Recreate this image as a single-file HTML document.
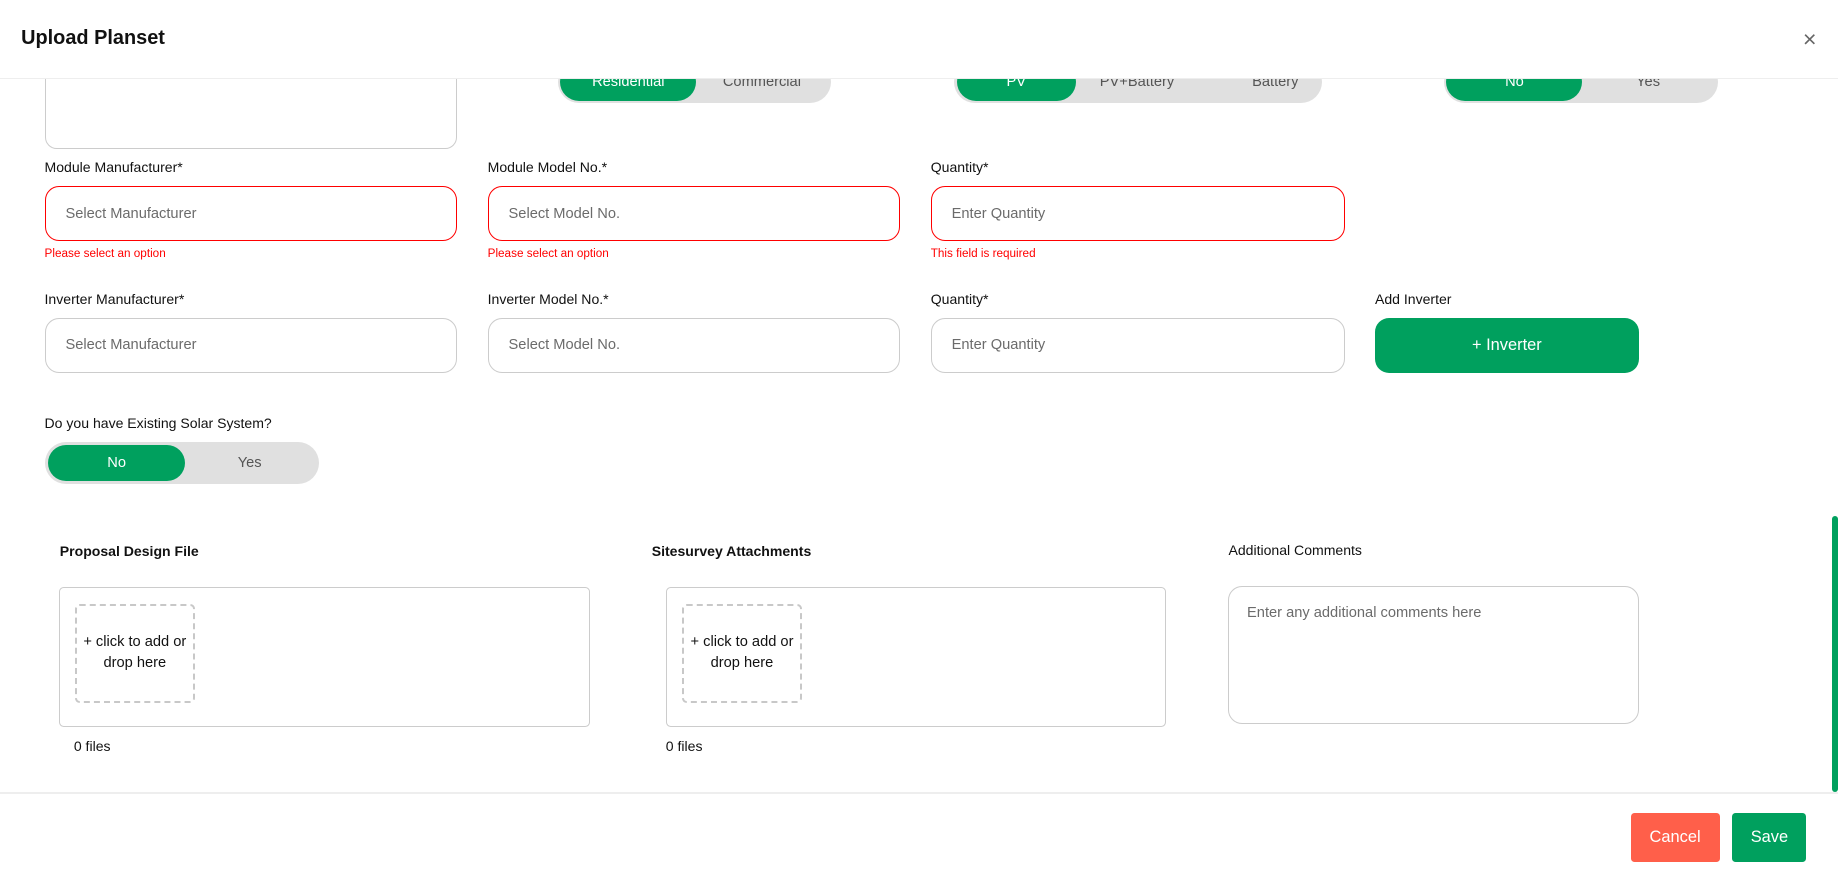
<!DOCTYPE html>
<html><head><meta charset="utf-8"><style>
html{zoom:1.17219}
*{box-sizing:border-box;margin:0;padding:0}
body{width:1568px;height:752px;position:relative;overflow:hidden;background:#fff;font-family:"Liberation Sans",sans-serif;color:#111}
.a{position:absolute}
.hdr{left:0;top:0;width:1568px;height:67px;background:#fff;border-bottom:1px solid #eee;z-index:5}
.lbl{font-size:12px;color:#111;white-space:nowrap}
.inp{border:1px solid #ccc;border-radius:12px;background:#fff;font-size:12.5px;color:#6b6b6b;padding-left:17px;display:flex;align-items:center}
.err{border-color:#f00}
.em{font-size:10px;color:#f00}
.tg{background:#e0e0e0;border-radius:20px}
.on{background:#00a05e;color:#fff;border-radius:18px;display:flex;align-items:center;justify-content:center;font-size:12.5px}
.off{color:#555;font-size:12.5px;display:flex;align-items:center;justify-content:center}
.box{border:1px solid #ccc;border-radius:4px}
.dash{border:2px dashed #c8c8c8;border-radius:4px;font-size:12.5px;text-align:center;display:flex;align-items:center;justify-content:center;line-height:18px;color:#111}
</style></head><body>
<div class="a hdr"><div class="a" style="left:18px;top:23px;font-size:17px;font-weight:bold">Upload Planset</div>
<div class="a" style="left:1538px;top:22px;font-size:20px;color:#666">×</div></div>

<div class="a inp" style="left:38px;top:40px;width:352px;height:87px;border-radius:10px"></div>
<div class="a tg" style="left:476px;top:52px;width:233px;height:36px"></div>
<div class="a on" style="left:478px;top:54px;width:116px;height:32px">Residential</div>
<div class="a off" style="left:594px;top:54px;width:112px;height:32px">Commercial</div>
<div class="a tg" style="left:814px;top:52px;width:314px;height:36px"></div>
<div class="a on" style="left:816px;top:54px;width:102px;height:32px">PV</div>
<div class="a off" style="left:918px;top:54px;width:104px;height:32px">PV+Battery</div>
<div class="a off" style="left:1036px;top:54px;width:104px;height:32px">Battery</div>
<div class="a tg" style="left:1232px;top:52px;width:234px;height:36px"></div>
<div class="a on" style="left:1234px;top:54px;width:116px;height:32px">No</div>
<div class="a off" style="left:1350px;top:54px;width:112px;height:32px">Yes</div>

<div class="a lbl" style="left:38px;top:136px">Module Manufacturer*</div>
<div class="a lbl" style="left:416px;top:136px">Module Model No.*</div>
<div class="a lbl" style="left:794px;top:136px">Quantity*</div>
<div class="a inp err" style="left:38px;top:159px;width:352px;height:47px">Select Manufacturer</div>
<div class="a inp err" style="left:416px;top:159px;width:352px;height:47px">Select Model No.</div>
<div class="a inp err" style="left:794px;top:159px;width:353px;height:47px">Enter Quantity</div>
<div class="a em" style="left:38px;top:211px">Please select an option</div>
<div class="a em" style="left:416px;top:211px">Please select an option</div>
<div class="a em" style="left:794px;top:211px">This field is required</div>

<div class="a lbl" style="left:38px;top:248px">Inverter Manufacturer*</div>
<div class="a lbl" style="left:416px;top:248px">Inverter Model No.*</div>
<div class="a lbl" style="left:794px;top:248px">Quantity*</div>
<div class="a lbl" style="left:1173px;top:248px">Add Inverter</div>
<div class="a inp" style="left:38px;top:271px;width:352px;height:47px">Select Manufacturer</div>
<div class="a inp" style="left:416px;top:271px;width:352px;height:47px">Select Model No.</div>
<div class="a inp" style="left:794px;top:271px;width:353px;height:47px">Enter Quantity</div>
<div class="a on" style="left:1173px;top:271px;width:225px;height:47px;border-radius:12px;font-size:14px">+ Inverter</div>

<div class="a lbl" style="left:38px;top:354px">Do you have Existing Solar System?</div>
<div class="a tg" style="left:38px;top:377px;width:234px;height:36px"></div>
<div class="a on" style="left:41px;top:380px;width:117px;height:30px">No</div>
<div class="a off" style="left:158px;top:380px;width:110px;height:30px">Yes</div>

<div class="a lbl" style="left:51px;top:463px;font-weight:bold">Proposal Design File</div>
<div class="a box" style="left:50px;top:501px;width:453px;height:119px"></div>
<div class="a dash" style="left:64px;top:515px;width:102px;height:85px">+ click to add or drop here</div>
<div class="a lbl" style="left:63px;top:630px">0 files</div>

<div class="a lbl" style="left:556px;top:463px;font-weight:bold">Sitesurvey Attachments</div>
<div class="a box" style="left:568px;top:501px;width:427px;height:119px"></div>
<div class="a dash" style="left:582px;top:515px;width:102px;height:85px">+ click to add or drop here</div>
<div class="a lbl" style="left:568px;top:630px">0 files</div>

<div class="a lbl" style="left:1048px;top:462px">Additional Comments</div>
<div class="a inp" style="left:1048px;top:500px;width:350px;height:118px;align-items:flex-start;padding-top:15px;padding-left:15px">Enter any additional comments here</div>

<div class="a" style="left:1563px;top:440px;width:5px;height:236px;background:#00a05e;border-radius:3px"></div>
<div class="a" style="left:0;top:676px;width:1568px;height:1px;background:#eee"></div>
<div class="a" style="left:1391px;top:694px;width:76px;height:41px;background:#ff5f4a;border-radius:3px;color:#fff;font-size:14px;display:flex;align-items:center;justify-content:center">Cancel</div>
<div class="a" style="left:1478px;top:694px;width:63px;height:41px;background:#00a05e;border-radius:3px;color:#fff;font-size:14px;display:flex;align-items:center;justify-content:center">Save</div>
</body></html>
